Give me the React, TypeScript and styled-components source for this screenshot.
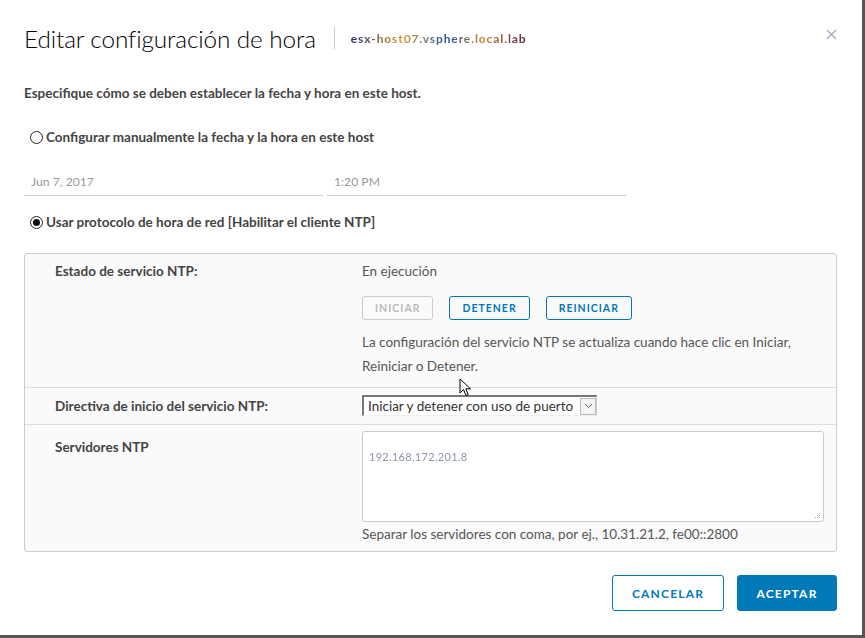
import React from "react";
import styled, { createGlobalStyle } from "styled-components";

const Global = createGlobalStyle`
  html, body { margin: 0; padding: 0; background: #565656; }
  body { width: 865px; height: 638px; overflow: hidden; font-family: Lato, "Open Sans", "Liberation Sans", sans-serif; }
  * { box-sizing: border-box; }
`;

const Dialog = styled.div`
  position: relative;
  width: 862px;
  height: 635px;
  background: #fff;
  display: flex;
  flex-direction: column;
  color: #565656;
`;

const Header = styled.div`
  display: flex;
  align-items: center;
  height: 76px;
  padding: 0 24px 0 24px;
`;

const Title = styled.h1`
  margin: 0;
  font-weight: 300;
  font-size: 24.3px;
  color: #000;
  letter-spacing: -0.1px;
`;

const Sep = styled.div`
  width: 1px;
  height: 22px;
  background: #ccc;
  margin: 0 16px 0 18px;
`;

const Host = styled.span`
  font-size: 12px;
  font-weight: 700;
  letter-spacing: 0.9px;
  background: linear-gradient(90deg, #1a2d6b, #d89a3a 30%, #1b4f9b 55%, #c88a2a 75%, #5a1a4a);
  -webkit-background-clip: text;
  background-clip: text;
  color: transparent;
  filter: blur(0.5px);
`;

const Close = styled.button`
  margin-left: auto;
  border: none;
  background: none;
  padding: 0;
  width: 14px;
  height: 14px;
  display: flex;
  align-items: center;
  justify-content: center;
  margin-top: -8px;
`;

const Body = styled.div`
  display: flex;
  flex-direction: column;
  padding: 8px 25px 0 24px;
`;

const Intro = styled.p`
  margin: 0;
  font-size: 13.5px;
  font-weight: 700;
  color: #444;
  line-height: 18px;
`;

const RadioRow = styled.label<{ $top: number }>`
  display: flex;
  align-items: center;
  gap: 3px;
  margin-top: ${(p) => p.$top}px;
  padding-left: 6px;
  font-size: 13.5px;
  font-weight: 700;
  color: #444;
  line-height: 18px;
`;

const RadioDot = styled.span<{ $checked?: boolean }>`
  width: 13px;
  height: 13px;
  border-radius: 50%;
  border: 1px solid #222;
  background: #fff;
  display: inline-flex;
  align-items: center;
  justify-content: center;
  &::after {
    content: "";
    width: 7px;
    height: 7px;
    border-radius: 50%;
    background: ${(p) => (p.$checked ? "#111" : "transparent")};
  }
`;

const DateRow = styled.div`
  display: flex;
  gap: 4px;
  margin-top: 26px;
  width: 602px;
`;

const UnderInput = styled.div`
  flex: 1;
  height: 24px;
  border-bottom: 1px solid #ccc;
  padding-left: 7px;
  font-size: 12.2px;
  color: #999;
  line-height: 20px;
`;

const Panel = styled.div`
  margin-top: 22px;
  border: 1px solid #ccc;
  border-radius: 3px;
  background: #fafafa;
  width: 813px;
`;

const Row = styled.div<{ $pt: number; $pb: number; $last?: boolean; $center?: boolean }>`
  display: grid;
  grid-template-columns: 307px 1fr;
  align-items: ${(p) => (p.$center ? "center" : "start")};
  padding: ${(p) => `${p.$pt}px 12px ${p.$pb}px 30px`};
  border-bottom: ${(p) => (p.$last ? "none" : "1px solid #ddd")};
`;

const Label = styled.div<{ $pt?: number }>`
  font-size: 13.5px;
  font-weight: 700;
  color: #444;
  line-height: 18px;
  padding-top: ${(p) => p.$pt ?? 0}px;
`;

const Value = styled.div`
  display: flex;
  flex-direction: column;
  font-size: 13.5px;
  color: #565656;
  line-height: 18px;
`;

const Buttons = styled.div`
  display: flex;
  gap: 16px;
  margin-top: 16px;
`;

const SmallBtn = styled.button<{ $disabled?: boolean }>`
  height: 24px;
  padding: 0 12px;
  border: 1px solid ${(p) => (p.$disabled ? "#ccc" : "#0079b8")};
  border-radius: 3px;
  background: transparent;
  color: ${(p) => (p.$disabled ? "#bbb" : "#0079b8")};
  font-family: inherit;
  font-size: 10.5px;
  font-weight: 700;
  letter-spacing: 1px;
  text-transform: uppercase;
  line-height: 22px;
`;

const Note = styled.p`
  margin: 10px 0 0;
  line-height: 24px;
  font-size: 13.5px;
  color: #565656;
`;

const Select = styled.div`
  display: flex;
  align-items: center;
  width: 235px;
  height: 21px;
  background: #fff;
  border-top: 2px solid #777;
  border-left: 2px solid #777;
  border-right: 1px solid #ccc;
  border-bottom: 1px solid #eee;
  font-size: 13.5px;
  color: #333;
  padding-left: 4px;
`;

const SelectText = styled.span`
  flex: 1;
  white-space: nowrap;
  overflow: hidden;
`;

const SelectArrow = styled.span`
  width: 16px;
  height: 17px;
  border: 1px solid #bbb;
  background: #f4f4f4;
  display: flex;
  align-items: center;
  justify-content: center;
  flex-shrink: 0;
`;

const TextArea = styled.div`
  position: relative;
  height: 91px;
  background: #fff;
  border: 1px solid #ccc;
  border-radius: 3px;
  padding: 15px 6px;
`;

const ServerText = styled.span`
  font-size: 11px;
  color: #8a93b0;
  letter-spacing: 0.3px;
  filter: blur(0.4px);
`;

const Grip = styled.svg`
  position: absolute;
  right: 2px;
  bottom: 2px;
`;

const Hint = styled.div`
  margin-top: 3px;
  font-size: 13.5px;
  color: #565656;
  line-height: 18px;
`;

const Footer = styled.div`
  display: flex;
  justify-content: flex-end;
  gap: 13px;
  padding: 23px 25px 0 0;
`;

const BigBtn = styled.button<{ $primary?: boolean }>`
  height: 36px;
  padding: 0 18px;
  border-radius: 3px;
  border: 1px solid #0079b8;
  background: ${(p) => (p.$primary ? "#0079b8" : "#fff")};
  color: ${(p) => (p.$primary ? "#fff" : "#0079b8")};
  font-family: inherit;
  font-size: 12px;
  font-weight: 700;
  letter-spacing: 1.2px;
  min-width: ${(p) => (p.$primary ? 100 : 112)}px;
`;

const Cursor = styled.svg`
  position: absolute;
  left: 459px;
  top: 378px;
`;

export default function App() {
  return (
    <>
      <Global />
      <Dialog>
        <Header>
          <Title>Editar configuración de hora</Title>
          <Sep />
          <Host>esx-host07.vsphere.local.lab</Host>
          <Close aria-label="Cerrar">
            <svg width="11" height="11" viewBox="0 0 11 11">
              <path d="M1 1L10 10M10 1L1 10" stroke="#9aa7b8" strokeWidth="1.2" />
            </svg>
          </Close>
        </Header>
        <Body>
          <Intro>Especifique cómo se deben establecer la fecha y hora en este host.</Intro>
          <RadioRow $top={26}>
            <RadioDot />
            Configurar manualmente la fecha y la hora en este host
          </RadioRow>
          <DateRow>
            <UnderInput>Jun 7, 2017</UnderInput>
            <UnderInput>1:20 PM</UnderInput>
          </DateRow>
          <RadioRow $top={17}>
            <RadioDot $checked />
            Usar protocolo de hora de red [Habilitar el cliente NTP]
          </RadioRow>
          <Panel>
            <Row $pt={8} $pb={9}>
              <Label>Estado de servicio NTP:</Label>
              <Value>
                <span>En ejecución</span>
                <Buttons>
                  <SmallBtn $disabled>Iniciar</SmallBtn>
                  <SmallBtn>Detener</SmallBtn>
                  <SmallBtn>Reiniciar</SmallBtn>
                </Buttons>
                <Note>
                  La configuración del servicio NTP se actualiza cuando hace clic en Iniciar,
                  <br />
                  Reiniciar o Detener.
                </Note>
              </Value>
            </Row>
            <Row $pt={7} $pb={8} $center>
              <Label>Directiva de inicio del servicio NTP:</Label>
              <Value>
                <Select>
                  <SelectText>Iniciar y detener con uso de puerto</SelectText>
                  <SelectArrow>
                    <svg width="9" height="6" viewBox="0 0 9 6">
                      <path d="M1 1L4.5 4.5L8 1" stroke="#666" strokeWidth="1" fill="none" />
                    </svg>
                  </SelectArrow>
                </Select>
              </Value>
            </Row>
            <Row $pt={6} $pb={8} $last>
              <Label $pt={7}>Servidores NTP</Label>
              <Value>
                <TextArea>
                  <ServerText>192.168.172.201.8</ServerText>
                  <Grip width="7" height="7" viewBox="0 0 7 7">
                    <g fill="#aaa">
                      <rect x="5" y="1" width="1" height="1" />
                      <rect x="3" y="3" width="1" height="1" />
                      <rect x="5" y="3" width="1" height="1" />
                      <rect x="1" y="5" width="1" height="1" />
                      <rect x="3" y="5" width="1" height="1" />
                      <rect x="5" y="5" width="1" height="1" />
                    </g>
                  </Grip>
                </TextArea>
                <Hint>Separar los servidores con coma, por ej., 10.31.21.2, fe00::2800</Hint>
              </Value>
            </Row>
          </Panel>
        </Body>
        <Footer>
          <BigBtn>CANCELAR</BigBtn>
          <BigBtn $primary>ACEPTAR</BigBtn>
        </Footer>
        <Cursor width="14" height="20" viewBox="0 0 14 20">
          <path d="M1 1L1 15L4.5 11.5L7 17.5L9.2 16.6L6.8 10.8L11.5 10.8Z" fill="#fff" stroke="#000" strokeWidth="1" strokeLinejoin="round" />
        </Cursor>
      </Dialog>
    </>
  );
}
